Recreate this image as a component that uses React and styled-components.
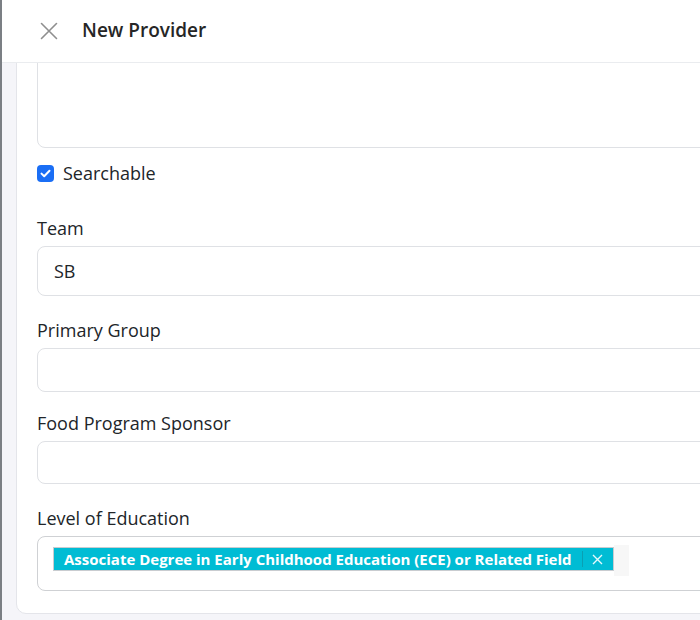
import React, { useLayoutEffect, useRef } from 'react';
import styled, { createGlobalStyle } from 'styled-components';

const GlobalStyle = createGlobalStyle`
  html, body {
    margin: 0;
    padding: 0;
    background: #ffffff;
  }
  body {
    font-family: "Open Sans", "Noto Sans", Arial, sans-serif;
    color: #212529;
  }
`;

const Screen = styled.div`
  display: flex;
  width: 700px;
  height: 620px;
  overflow: hidden;
`;

const Backdrop = styled.div`
  flex: 0 0 2px;
  background: #7b7f84;
`;

const Drawer = styled.div`
  flex: 0 0 780px;
  display: flex;
  flex-direction: column;
  background: #ffffff;
`;

const Header = styled.div`
  flex: 0 0 63px;
  display: flex;
  align-items: center;
  gap: 24px;
  padding-left: 38px;
  border-bottom: 1px solid #eaecef;
  box-sizing: border-box;
`;

const CloseButton = styled.button`
  display: flex;
  align-items: center;
  justify-content: center;
  width: 18px;
  height: 18px;
  padding: 0;
  border: none;
  background: none;
  cursor: pointer;
`;

const Title = styled.h1`
  margin: 0 0 2px 0;
  font-size: 19px;
  font-weight: 600;
  color: #262626;
`;

const Body = styled.div`
  flex: 1;
  overflow: hidden;
  background: #f5f5f9;
  padding: 0 0 8px 14px;
`;

const Card = styled.div`
  background: #ffffff;
  border: 1px solid #e4e5ea;
  border-radius: 10px;
  padding: 20px 20px 22px 20px;
  display: flex;
  flex-direction: column;
`;

const Field = styled.div`
  display: flex;
  flex-direction: column;
  gap: 7px;
  margin-top: ${p => p.$top}px;
`;

const Label = styled.label`
  font-size: 18px;
  line-height: 22px;
  color: #212529;
`;

const Input = styled.div`
  box-sizing: border-box;
  height: ${p => p.$h}px;
  border: 1px solid #dfe1e5;
  border-radius: 8px;
  padding: 0 16px;
  display: flex;
  align-items: center;
  font-size: 18px;
  color: #212529;
`;

const TextArea = styled.div`
  box-sizing: border-box;
  height: 130px;
  border: 1px solid #dfe1e5;
  border-radius: 8px;
`;

const CheckRow = styled.div`
  display: flex;
  align-items: center;
  gap: 9px;
  margin-top: 14px;
  font-size: 18px;
  line-height: 22px;
`;

const CheckBox = styled.span`
  width: 17px;
  height: 17px;
  border-radius: 4px;
  background: #1a6ef5;
  display: flex;
  align-items: center;
  justify-content: center;
`;

const MultiSelect = styled.div`
  box-sizing: border-box;
  height: ${p => p.$h}px;
  border: 1px solid #cfd1d4;
  border-radius: 8px;
  padding: 8px 15px 0 15px;
  display: flex;
  align-items: flex-start;
`;

const Chip = styled.span`
  display: inline-flex;
  align-items: center;
  margin-top: 2px;
  height: 24px;
  box-sizing: border-box;
  background: #00bcd4;
  border: 1px solid #c9ccd0;
  color: #ffffff;
  font-size: 15px;
  font-weight: 700;
`;

const ChipText = styled.span`
  padding: 0 10px;
  line-height: 22px;
`;

const ChipRemove = styled.span`
  display: flex;
  align-items: center;
  justify-content: center;
  width: 30px;
  height: 16px;
  border-left: 1px solid #0a9fb3;
`;

const SearchInput = styled.span`
  width: 15px;
  height: 31px;
  background: #f7f7f7;
`;

const CloseIcon = () => (
  <svg width="18" height="18" viewBox="0 0 18 18">
    <path d="M1.5 1.5L16.5 16.5M16.5 1.5L1.5 16.5" stroke="#8f8f8f" strokeWidth="1.6" strokeLinecap="round" />
  </svg>
);

const CheckIcon = () => (
  <svg width="11" height="9" viewBox="0 0 11 9">
    <path d="M1.5 4.6L4.2 7.2L9.5 1.8" fill="none" stroke="#fff" strokeWidth="2" strokeLinecap="round" strokeLinejoin="round" />
  </svg>
);

const SmallX = () => (
  <svg width="11" height="11" viewBox="0 0 11 11">
    <path d="M1 1L10 10M10 1L1 10" stroke="#e6f9fc" strokeWidth="1.4" />
  </svg>
);

export default function App() {
  const bodyRef = useRef(null);
  const areaRef = useRef(null);

  useLayoutEffect(() => {
    const body = bodyRef.current;
    const area = areaRef.current;
    if (!body || !area) return;
    const bottom = area.getBoundingClientRect().bottom - body.getBoundingClientRect().top + body.scrollTop;
    body.scrollTop = bottom - 85;
  }, []);

  return (
    <>
      <GlobalStyle />
      <Screen>
        <Backdrop />
        <Drawer>
          <Header>
            <CloseButton aria-label="Close"><CloseIcon /></CloseButton>
            <Title>New Provider</Title>
          </Header>
          <Body ref={bodyRef}>
            <Card>
              <TextArea ref={areaRef} />
              <CheckRow>
                <CheckBox><CheckIcon /></CheckBox>
                Searchable
              </CheckRow>
              <Field $top={33}>
                <Label>Team</Label>
                <Input $h={50}>SB</Input>
              </Field>
              <Field $top={23}>
                <Label>Primary Group</Label>
                <Input $h={44} />
              </Field>
              <Field $top={20}>
                <Label>Food Program Sponsor</Label>
                <Input $h={43} />
              </Field>
              <Field $top={23}>
                <Label>Level of Education</Label>
                <MultiSelect $h={55}>
                  <Chip>
                    <ChipText>Associate Degree in Early Childhood Education (ECE) or Related Field</ChipText>
                    <ChipRemove><SmallX /></ChipRemove>
                  </Chip>
                  <SearchInput />
                </MultiSelect>
              </Field>
            </Card>
          </Body>
        </Drawer>
      </Screen>
    </>
  );
}
